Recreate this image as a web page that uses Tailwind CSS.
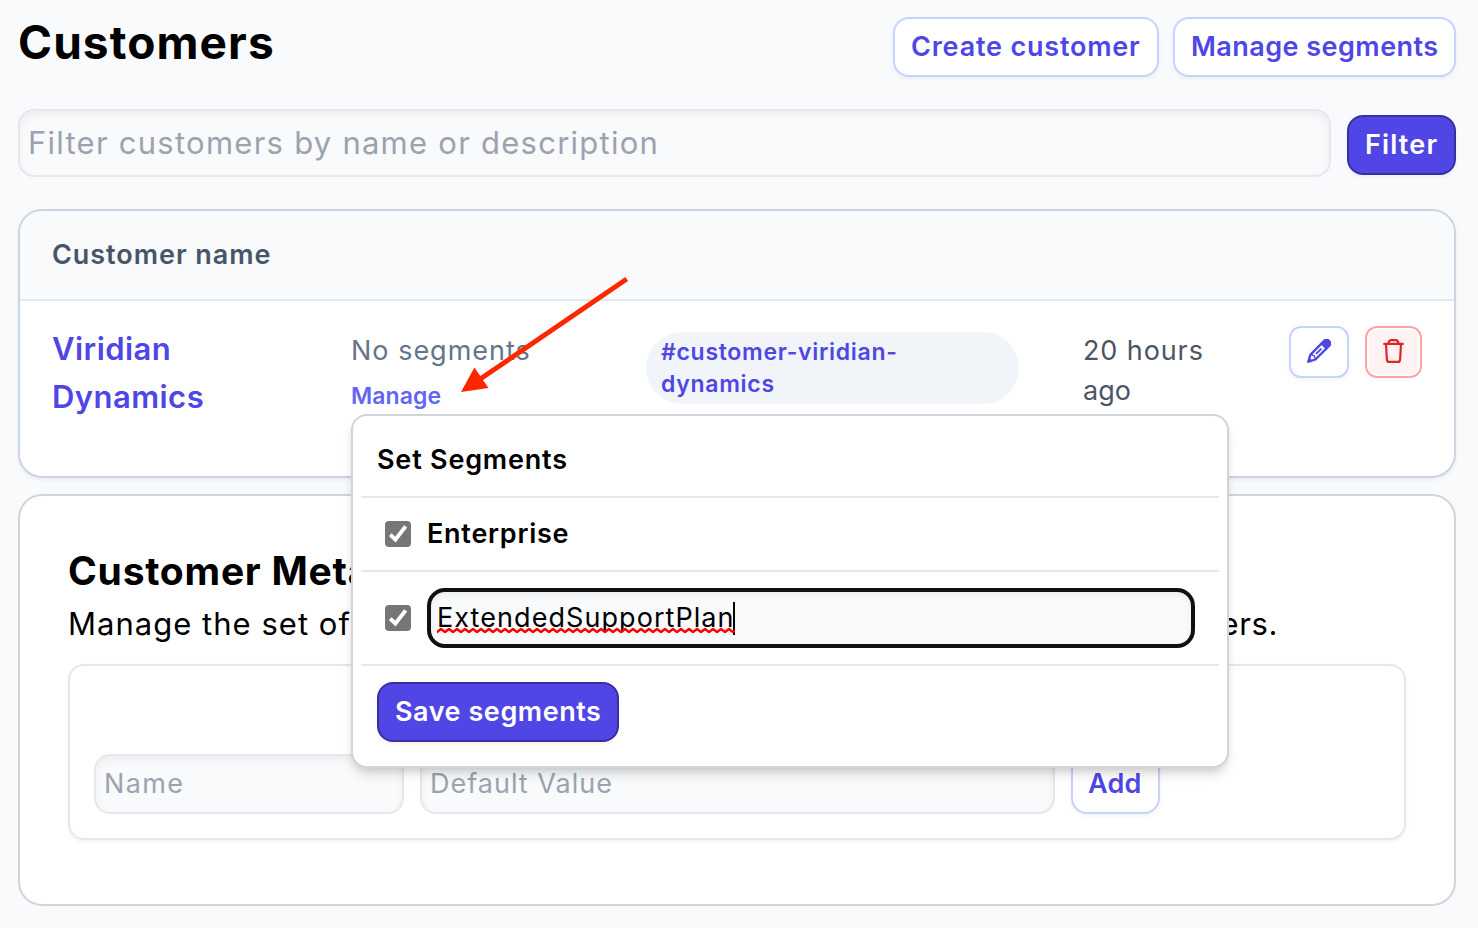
<!DOCTYPE html>
<html lang="en">
<head>
<meta charset="utf-8">
<title>Customers</title>
<script src="https://cdn.jsdelivr.net/npm/@tailwindcss/browser@4"></script>
</head>
<body class="relative h-[928px] w-[1478px] overflow-hidden bg-[#f9fafc] font-['Inter',sans-serif] text-[27px] leading-10 text-black">
<div class="flex flex-col pt-[17px] pr-[22px] pl-[18px]">
  <!-- Page header -->
  <header class="flex h-[60px] items-start">
    <h1 class="-mt-[2px] flex-1 text-[46px] leading-[54px] font-bold tracking-[1.1px] whitespace-nowrap">Customers</h1>
    <div class="flex gap-[14px] font-semibold text-[#4f46e5]">
      <button class="flex h-[60px] w-[266px] items-center rounded-2xl border-2 border-[#c7d2fe] bg-white pl-4 text-left tracking-[0.8px] whitespace-nowrap shadow-[0_2px_4px_rgba(0,0,0,0.05)]">Create customer</button>
      <button class="flex h-[60px] w-[283px] items-center rounded-2xl border-2 border-[#c7d2fe] bg-white pl-4 text-left tracking-[0.46px] whitespace-nowrap shadow-[0_2px_4px_rgba(0,0,0,0.05)]">Manage segments</button>
    </div>
  </header>

  <!-- Filter bar -->
  <div class="mt-8 flex h-[68px] items-center gap-4">
    <div class="flex h-[68px] flex-1 items-center rounded-2xl border-2 border-[#e5e7eb] pl-2 text-[31px] tracking-[1.25px] text-[#9ca3af] shadow-[inset_0_4px_8px_rgba(0,0,0,0.05)]"><span class="whitespace-nowrap">Filter customers by name or description</span></div>
    <button class="mt-1 flex h-[60px] w-[109px] items-center rounded-2xl border-2 border-[#3730a3] bg-[#4f46e5] pl-4 font-semibold tracking-[1.15px] text-white shadow-[0_2px_4px_rgba(0,0,0,0.05)]">Filter</button>
  </div>

  <!-- Customer table -->
  <section class="mt-8 h-[269px] overflow-hidden rounded-3xl border-2 border-[#cbd5e1] bg-white shadow-[0_2px_4px_rgba(0,0,0,0.05)]">
    <div class="flex h-[90px] items-center border-b-2 border-[#e2e8f0] bg-[#f8fafc] pl-[32px] font-semibold tracking-[0.95px] text-[#475569]">Customer name</div>
    <div class="flex pl-[32px]">
      <div class="w-[299px] pt-[24px] text-[31px] leading-[48px] font-semibold tracking-[0.45px] text-[#4f46e5]">Viridian<br>Dynamics</div>
      <div class="w-[295px] pt-[30px]">
        <p class="tracking-[1px] text-[#64748b]">No segments</p>
        <p class="pt-[9px] text-[23px] leading-[32px] font-semibold tracking-[0.1px] text-[#6366f1]">Manage</p>
      </div>
      <div class="mt-[31px] h-[72px] w-[373px] rounded-full bg-[#f1f5f9] pt-[4px] pl-[15px] text-[23px] leading-[32px] font-semibold tracking-[0.7px] text-[#4f46e5]">#customer-viridian-<br>dynamics</div>
      <div class="ml-[64px] w-[206px] pt-[30px] tracking-[0.9px] text-[#4b5563]">20 hours<br><span class="tracking-[0px]">ago</span></div>
      <div class="flex gap-4 pt-[25px]">
        <button class="flex h-[52px] w-[60px] items-center justify-center rounded-xl border-2 border-[#c7d2fe] bg-white shadow-[0_2px_4px_rgba(0,0,0,0.05)]">
          <svg class="mb-[2px] size-6" viewBox="0 0 24 24" fill="none">
            <g transform="translate(0.3 23.7) rotate(-45)">
              <path d="M1.4 0 L8 -3.5 H28 Q30.6 -3.5 30.6 -1.6 V1.6 Q30.6 3.5 28 3.5 H8 Z" stroke="#4f46e5" stroke-width="2.3" stroke-linejoin="round"/>
              <path d="M22.5 -4 H28 Q31 -4 31 -1.4 V1.4 Q31 4 28 4 H22.5 Z" fill="#4f46e5"/>
              <path d="M0 0 L5 -2.9 V2.9 Z" fill="#4f46e5"/>
              <path d="M8.4 -3.4 L9.8 0 L8.4 3.4" stroke="#4f46e5" stroke-width="1.4"/>
              <path d="M12.5 0 H20" stroke="#4f46e5" stroke-width="1.9"/>
            </g>
            <path d="M18.6 1.6 Q20.4 0.2 22.4 1.6 Q23.8 3.6 22.4 5.4 L20.8 7 L17 3.2 Z" fill="#4f46e5"/>
          </svg>
        </button>
        <button class="flex h-[52px] w-[57px] rounded-xl border-2 border-[#fca5a5] bg-white p-[2px]">
          <span class="flex flex-1 items-center justify-center rounded-lg bg-[#fef2f2]">
            <svg class="mb-[2px] h-6 w-[21px]" viewBox="0 0 21 24" fill="none" stroke="#dc2626" stroke-width="2.2" stroke-linejoin="round" stroke-linecap="round">
              <path d="M1.2 4.9 H19.8 M5.3 4.4 Q6.3 1.1 7.9 1.1 H13.1 Q14.7 1.1 15.7 4.4 M3 5 L3.9 20.8 Q4.1 22.9 6.1 22.9 H14.9 Q16.9 22.9 17.1 20.8 L18 5"/>
            </svg>
          </span>
        </button>
      </div>
    </div>
  </section>

  <!-- Customer metadata -->
  <section class="mt-4 h-[412px] rounded-3xl border-2 border-[#d1d5db] bg-white pt-[48px] pr-[48px] pl-[48px]">
    <h2 class="h-[54px] text-[39px] leading-[54px] font-bold tracking-[0.75px] whitespace-nowrap">Customer Metadata</h2>
    <div class="flex h-12 w-[1210px] justify-between text-[31px] leading-[52px] tracking-[1.02px] whitespace-nowrap"><span>Manage the set of</span><span class="tracking-[0.6px]">ers.</span></div>
    <div class="mt-[18px] flex h-[176px] items-end gap-4 rounded-2xl border-2 border-[#e5e7eb] pb-6 pl-6 tracking-[1.05px] text-[#9ca3af] shadow-[0_2px_4px_rgba(0,0,0,0.05)]">
      <div class="flex h-[60px] w-[310px] items-center rounded-2xl border-2 border-[#e5e7eb] bg-[#f8fafc] pl-[8px] tracking-[1.4px] shadow-[inset_0_4px_8px_rgba(0,0,0,0.05)]">Name</div>
      <div class="flex h-[60px] w-[635px] items-center rounded-2xl border-2 border-[#e5e7eb] bg-[#f8fafc] pl-2 tracking-[1px] shadow-[inset_0_4px_8px_rgba(0,0,0,0.05)]">Default Value</div>
      <button class="flex h-[60px] w-[89px] items-center rounded-2xl border-2 border-[#c7d2fe] bg-white pl-[15px] font-semibold tracking-[0.2px] text-[#4f46e5] shadow-[0_2px_4px_rgba(0,0,0,0.05)]">Add</button>
    </div>
  </section>
</div>

<!-- Segment popover -->
<div class="absolute top-[414px] left-[351px] flex h-[354px] w-[878px] flex-col rounded-2xl border-2 border-[#d1d5db] bg-white px-2 font-semibold shadow-[0_8px_12px_-2px_rgba(0,0,0,0.14),0_4px_8px_-4px_rgba(0,0,0,0.12)]">
  <div class="h-[82px] border-b-2 border-[#e5e7eb] pt-[24px] pl-4 tracking-[0.8px]">Set Segments</div>
  <label class="flex h-[74px] items-center border-b-2 border-[#e5e7eb] pl-6 tracking-[0.75px]">
    <svg class="mr-4 size-[26px]" viewBox="0 0 26 26"><rect width="26" height="26" rx="4" fill="#767676"/><path d="M5.3 13.6 L10.4 18.6 L20.6 5.4" fill="none" stroke="#fff" stroke-width="4"/></svg>
    Enterprise
  </label>
  <div class="flex h-[94px] items-center border-b-2 border-[#e5e7eb] pl-6 font-normal">
    <svg class="mr-4 size-[26px]" viewBox="0 0 26 26"><rect width="26" height="26" rx="4" fill="#767676"/><path d="M5.3 13.6 L10.4 18.6 L20.6 5.4" fill="none" stroke="#fff" stroke-width="4"/></svg>
    <div class="flex h-[60px] w-[768px] items-center rounded-[18px] border-4 border-[#101010] bg-[#f8fafc] pl-[6px] shadow-[inset_0_3px_6px_rgba(0,0,0,0.06)]">
      <span class="relative w-[296px] tracking-[1.06px] whitespace-nowrap">ExtendedSupportPlan
        <svg class="absolute top-[29px] left-0 h-[7px] w-[298px]" viewBox="0 0 298 7"><defs><pattern id="wave" width="8" height="7" patternUnits="userSpaceOnUse"><path d="M-4 2 L0 5 L4 2 L8 5 L12 2" fill="none" stroke="#f00" stroke-width="2.5" stroke-linejoin="round"/></pattern></defs><rect width="298" height="7" fill="url(#wave)"/></svg>
      </span>
      <span class="h-[33px] w-[2px] bg-black"></span>
    </div>
  </div>
  <button class="mt-4 ml-4 flex h-[60px] w-[242px] items-center rounded-2xl border-2 border-[#3730a3] bg-[#4f46e5] pl-4 font-semibold tracking-[0.55px] whitespace-nowrap text-white shadow-[0_2px_4px_rgba(0,0,0,0.05)]">Save segments</button>
</div>

<!-- Pointer to the Manage link -->
<svg class="absolute top-[270px] left-[455px] h-[130px] w-[180px]" viewBox="455 270 180 130"><path d="M626.7 279 L478 380.5" stroke="#ff2600" stroke-width="5" fill="none"/><path d="M461 392 L474.4 367.5 L488.5 388 Z" fill="#ff2600"/></svg>
</body>
</html>
